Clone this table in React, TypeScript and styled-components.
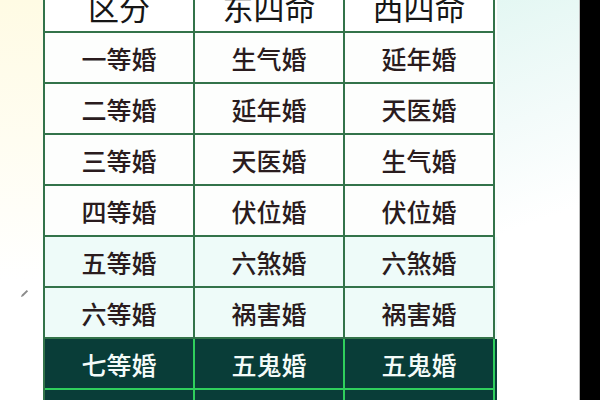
import React from 'react';
import styled, { createGlobalStyle } from 'styled-components';

const GlobalStyle = createGlobalStyle`
  html, body {
    margin: 0;
    padding: 0;
    width: 600px;
    height: 400px;
    overflow: hidden;
    background: #ffffff;
  }
  body {
    font-family: "Noto Sans CJK SC", "Noto Sans", sans-serif;
  }
`;

const Page = styled.div`
  display: flex;
  width: 600px;
  height: 400px;
  overflow: hidden;
`;

const LeftGutter = styled.div`
  width: 43px;
  flex-shrink: 0;
  padding: 279px 0 0 20px;
  box-sizing: border-box;
  background: linear-gradient(180deg, #fffbe4 0%, #fffdf1 35%, #ffffff 70%);
`;

const RightGutter = styled.div`
  width: 82px;
  flex-shrink: 0;
  background: linear-gradient(160deg, #e4f7f3 0%, #f3fbfa 30%, #ffffff 55%);
  border-right: 1px solid #bdbdbd;
`;

const BlackStrip = styled.div`
  flex: 1;
  background: #000;
`;

const Table = styled.div`
  width: 452px;
  flex-shrink: 0;
  display: flex;
  flex-direction: column;
  margin-top: -18px;
  border-left: 2px solid #33734a;
`;

type Tone = 'head' | 'plain' | 'tint' | 'dark';

const bg: Record<Tone, string> = {
  head: '#ffffff',
  plain: '#fdfefd',
  tint: '#eefbf9',
  dark: '#093d38',
};

const Row = styled.div<{ $tone: Tone }>`
  display: grid;
  grid-template-columns: 150px 150px 150px;
  background: ${({ $tone }) => bg[$tone]};
`;

const Cell = styled.div<{ $tone: Tone }>`
  height: 51px;
  box-sizing: border-box;
  display: flex;
  align-items: center;
  justify-content: center;
  border-right: 2px solid ${({ $tone }) => ($tone === 'dark' ? '#2fcf5c' : '#33734a')};
  border-bottom: 2px solid ${({ $tone }) => ($tone === 'dark' ? '#2fcf5c' : '#33734a')};
  font-size: ${({ $tone }) => ($tone === 'head' ? '31px' : '25px')};
  font-weight: ${({ $tone }) => ($tone === 'head' ? 400 : 500)};
  color: ${({ $tone }) => ($tone === 'dark' ? '#f4fbf8' : $tone === 'head' ? '#161616' : '#2a1c1e')};
`;

const rows: { tone: Tone; cells: string[] }[] = [
  { tone: 'head', cells: ['区分', '东四命', '西四命'] },
  { tone: 'plain', cells: ['一等婚', '生气婚', '延年婚'] },
  { tone: 'plain', cells: ['二等婚', '延年婚', '天医婚'] },
  { tone: 'plain', cells: ['三等婚', '天医婚', '生气婚'] },
  { tone: 'plain', cells: ['四等婚', '伏位婚', '伏位婚'] },
  { tone: 'tint', cells: ['五等婚', '六煞婚', '六煞婚'] },
  { tone: 'tint', cells: ['六等婚', '祸害婚', '祸害婚'] },
  { tone: 'dark', cells: ['七等婚', '五鬼婚', '五鬼婚'] },
  { tone: 'dark', cells: ['八等婚', '绝命婚', '绝命婚'] },
];

const Pencil = () => (
  <svg width="9" height="9" viewBox="0 0 10 10">
    <path d="M1 9 L2 6.5 L7.5 1 L9 2.5 L3.5 8 Z" fill="#8a8a8a" />
  </svg>
);

const App = () => {
  return (
    <>
      <GlobalStyle />
      <Page>
        <LeftGutter>
          <Pencil />
        </LeftGutter>
        <Table>
          {rows.map((r, i) => (
            <Row key={i} $tone={r.tone}>
              {r.cells.map((c, j) => (
                <Cell key={j} $tone={r.tone}>
                  {c}
                </Cell>
              ))}
            </Row>
          ))}
        </Table>
        <RightGutter />
        <BlackStrip />
      </Page>
    </>
  );
};

export default App;
